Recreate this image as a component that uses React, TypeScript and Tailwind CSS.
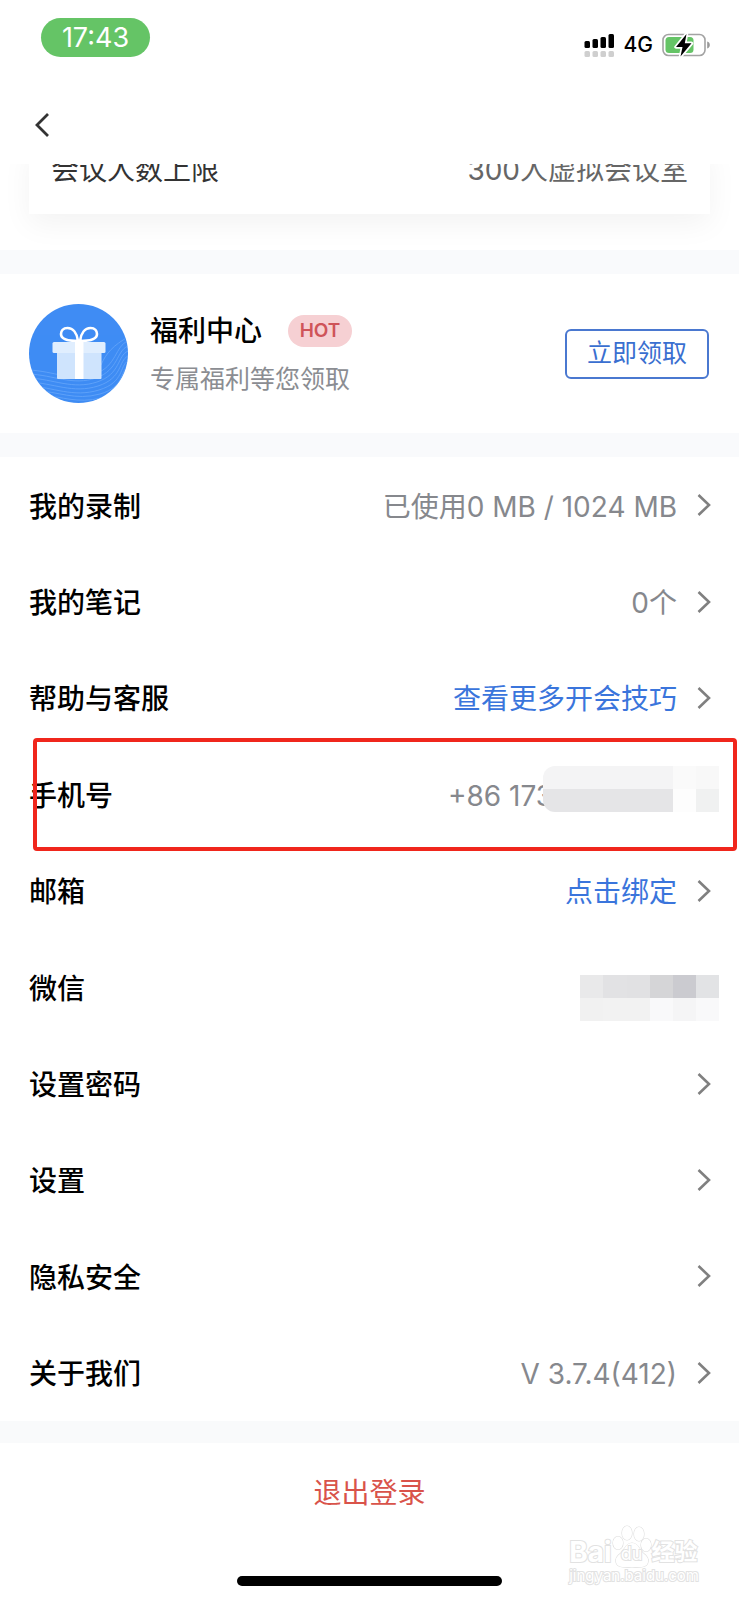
import React from "react";

type RowData = {
  label: string;
  value?: string;
  link?: boolean;
  arrow?: boolean;
  highlight?: boolean;
  mask?: "phone" | "wechat";
};

const rows: RowData[] = [
  { label: "我的录制", value: "已使用0 MB / 1024 MB", arrow: true },
  { label: "我的笔记", value: "0个", arrow: true },
  { label: "帮助与客服", value: "查看更多开会技巧", link: true, arrow: true },
  { label: "手机号", value: "+86 173", highlight: true, mask: "phone" },
  { label: "邮箱", value: "点击绑定", link: true, arrow: true },
  { label: "微信", mask: "wechat" },
  { label: "设置密码", arrow: true },
  { label: "设置", arrow: true },
  { label: "隐私安全", arrow: true },
  { label: "关于我们", value: "V 3.7.4(412)", arrow: true },
];

function StatusBar() {
  return (
    <div className="flex items-start justify-between pt-[18px] pr-[29px] pl-[41px]">
      <div className="flex h-[39px] w-[109px] items-center justify-center rounded-full bg-[#65c466] text-[27px] leading-none text-white">
        17:43
      </div>
      <div className="flex items-center gap-[9px] pt-[14px]">
        <svg width="31" height="24" viewBox="0 0 31 24" aria-hidden="true">
          <g fill="#000">
            <rect x="0.5" y="8" width="5.5" height="7" rx="1.5" />
            <rect x="8.5" y="6" width="5.5" height="9" rx="1.5" />
            <rect x="16.5" y="4" width="5.5" height="11" rx="1.5" />
            <rect x="24.5" y="1" width="5.5" height="14" rx="1.5" />
          </g>
          <g fill="#cfcfcf">
            <rect x="0.5" y="18" width="5.5" height="6" rx="1.5" />
            <rect x="8.5" y="18" width="5.5" height="6" rx="1.5" />
            <rect x="16.5" y="18" width="5.5" height="6" rx="1.5" />
            <rect x="24.5" y="18" width="5.5" height="6" rx="1.5" />
          </g>
        </svg>
        <span className="text-[21px] leading-[26px] font-medium text-black">4G</span>
        <svg width="48" height="24" viewBox="0 0 48 24" aria-hidden="true">
          <rect x="1" y="1.5" width="42" height="21" rx="5.5" fill="#fff" stroke="#a3a3a3" strokeWidth="1.6" />
          <path d="M45.2 8.5c1.800.6 2.600 1.900 2.600 3.500s-.8 2.900-2.600 3.500z" fill="#999" />
          <rect x="3.500" y="4" width="28" height="16" rx="3.500" fill="#65c466" />
          <path d="M24.500 1 14 14h6.500L18.500 23.500 29.500 10.300h-6.700z" fill="#000" stroke="#fff" strokeWidth="3.500" strokeLinejoin="round" paintOrder="stroke" />
        </svg>
      </div>
    </div>
  );
}

function GiftIcon() {
  return (
    <svg className="shrink-0" width="99" height="99" viewBox="0 0 99 99" aria-hidden="true">
      <defs>
        <clipPath id="gift-disc">
          <circle cx="49.5" cy="49.5" r="49.5" />
        </clipPath>
      </defs>
      <circle cx="49.5" cy="49.5" r="49.5" fill="#3f8cf4" />
      <g clipPath="url(#gift-disc)" fill="none" stroke="#6aa9fa" strokeWidth="0.9" opacity="0.8">
        <path d="M0 66C24 67 44 78 66 70S86 42 99 37" />
        <path d="M0 70C24 71 44 82 67 74S87 47 99 42" />
        <path d="M0 74C24 75 44 86 68 78S88 52 99 47" />
        <path d="M0 78C24 79 44 90 69 82S89 57 99 52" />
        <path d="M0 82C24 83 44 94 70 86S90 62 99 57" />
        <path d="M8 87C28 87 46 97 71 90S91 67 99 62" />
        <path d="M16 92C32 92 48 100 72 94S92 72 99 67" />
        <path d="M72 61C77 49 85 41 99 33" />
      </g>
      <g fill="none" stroke="#fff" strokeWidth="2.6">
        <path d="M49 37c-1-8-5-13-10.500-13-4.500 0-6.500 3-6.500 6 0 4.500 5 7 17 7z" />
        <path d="M51 37c1-8 5-13 10.500-13 4.500 0 6.500 3 6.500 6 0 4.500-5 7-17 7z" />
      </g>
      <rect x="28" y="45" width="44.500" height="30" rx="1" fill="#cfe4fd" />
      <rect x="23.500" y="38" width="53" height="11" rx="1.500" fill="#e0eefe" />
      <path d="M46 36h8.500v39H46z" fill="#fff" />
    </svg>
  );
}

function PhoneMask() {
  return (
    <div className="absolute top-5 right-5 grid w-[176px] grid-cols-[130px_23px_23px] grid-rows-[23px_23px]" aria-hidden="true">
      <i className="rounded-tl-xl bg-[#f4f4f5]" />
      <i className="bg-[#fafafa]" />
      <i className="bg-[#f8f8f8]" />
      <i className="rounded-bl-xl bg-[#e5e5e7]" />
      <i className="bg-[#fdfdfd]" />
      <i className="bg-[#f0f1f1]" />
    </div>
  );
}

function WechatMask() {
  return (
    <div className="absolute top-9 right-5 grid grid-cols-[23px_24px_23px_23px_23px_23px] grid-rows-[23px_23px]" aria-hidden="true">
      <i className="bg-[#e9e9ea]" />
      <i className="bg-[#e2e2e4]" />
      <i className="bg-[#e1e1e3]" />
      <i className="bg-[#d5d5d7]" />
      <i className="bg-[#cbcbd0]" />
      <i className="bg-[#e2e3e5]" />
      <i className="bg-[#f1f1f1]" />
      <i className="bg-[#f2f2f2]" />
      <i className="bg-[#f2f2f2]" />
      <i className="bg-[#f9f9fa]" />
      <i className="bg-[#f5f5f6]" />
      <i className="bg-[#f9f9fa]" />
    </div>
  );
}

function Row({ row }: { row: RowData }) {
  return (
    <li className="relative flex">
      <button type="button" className="flex flex-1 items-center pr-7 pl-[29px] text-[28px] leading-10">
        <span className="pt-[3px] font-medium text-black">{row.label}</span>
        {row.value && (
          <span
            className={
              row.link
                ? "ml-auto pt-[3px] text-[#3a75dc]"
                : row.mask
                  ? "mr-[154px] ml-auto w-[109px] pt-[3px] text-left whitespace-nowrap text-[#86888d]"
                  : "ml-auto pt-[3px] text-[#86888d]"
            }
          >
            {row.value}
          </span>
        )}
        {row.arrow && (
          <svg
            className={row.value ? "ml-5" : "ml-auto"}
            width="14"
            height="22"
            viewBox="0 0 14 22"
            fill="none"
            stroke="#808080"
            strokeWidth="2.6"
            aria-hidden="true"
          >
            <path d="M1.500 1l10.500 10L1.500 21" />
          </svg>
        )}
      </button>
      {row.mask === "phone" && <PhoneMask />}
      {row.mask === "wechat" && <WechatMask />}
      {row.highlight && (
        <div className="pointer-events-none absolute -top-2 right-[2px] -bottom-2 left-[33px] rounded-[4px] border-4 border-[#f0261c]" />
      )}
    </li>
  );
}

function Watermark() {
  return (
    <div
      className="pointer-events-none absolute right-10 bottom-4 flex flex-col text-white [paint-order:stroke_fill] [-webkit-text-stroke:2px_#e2e2e2]"
    >
      <div className="flex h-11 items-end">
        <span className="text-[28px] leading-8 font-bold">Bai</span>
        <span className="relative flex h-11 w-10 items-end justify-center">
          <svg className="absolute inset-0" width="40" height="44" viewBox="0 0 40 44" fill="#fff" stroke="#dedede" strokeWidth="1.200" aria-hidden="true">
            <ellipse cx="6" cy="19" rx="5" ry="6.500" />
            <ellipse cx="15" cy="9" rx="5" ry="7" />
            <ellipse cx="27" cy="10" rx="5" ry="7" />
            <ellipse cx="34" cy="21" rx="5" ry="6.500" />
            <path d="M20 19c-6 0-7 6-11 10-4 3-6 6-5 9 1 6 8 5 16 5s15 1 16-5c1-3-1-6-5-9-4-4-5-10-11-10z" />
          </svg>
          <span className="relative text-lg leading-7">du</span>
        </span>
        <span className="text-[23px] leading-8 font-bold">经验</span>
      </div>
      <span className="text-[15px] leading-4">jingyan.baidu.com</span>
    </div>
  );
}

export default function App() {
  return (
    <main className="relative flex min-h-screen flex-col overflow-hidden bg-white font-['Inter','Noto_Sans_CJK_SC',sans-serif]">
      <header className="h-[164px]">
        <StatusBar />
        <button type="button" aria-label="返回" className="mt-[54px] ml-[34px] flex h-[26px] w-5 items-center">
          <svg width="16" height="26" viewBox="0 0 16 26" fill="none" stroke="#333" strokeWidth="2.8" aria-hidden="true">
            <path d="M14 2L3 13l11 11" />
          </svg>
        </button>
      </header>

      <section className="h-[86px] overflow-hidden">
        <div className="mx-[29px] -mt-5 flex justify-between bg-white px-[22px] pt-[6px] pb-6 text-[28px] leading-10 shadow-[0_10px_30px_rgba(0,0,0,0.05)]">
          <span className="text-[#333]">会议人数上限</span>
          <span className="text-[#666]">300人虚拟会议室</span>
        </div>
      </section>

      <section className="flex items-center border-y-[24px] border-[#f9fafc] py-[30px] pr-[30px] pl-[29px]">
        <GiftIcon />
        <div className="ml-[22px] flex flex-1 flex-col gap-2 pt-[2px]">
          <div className="flex items-center gap-[26px]">
            <h2 className="text-[28px] leading-10 font-medium text-black">福利中心</h2>
            <span className="flex h-8 w-16 items-center justify-center rounded-full bg-[#f6d0d3] text-[19px] leading-none font-semibold text-[#cf5459]">
              HOT
            </span>
          </div>
          <p className="text-[25px] leading-10 text-[#8b8d92]">专属福利等您领取</p>
        </div>
        <button type="button" className="h-[50px] rounded-md border-2 border-[#4a78d0] px-5 text-[25px] leading-none text-[#3a6fd0]">
          立即领取
        </button>
      </section>

      <ul className="grid flex-1 auto-rows-fr">
        {rows.map((row) => (
          <Row key={row.label} row={row} />
        ))}
      </ul>

      <footer className="flex flex-col items-center border-t-[22px] border-[#f9fafb] pt-[30px] pb-[14px]">
        <button type="button" className="text-[28px] leading-10 text-[#d9534a]">
          退出登录
        </button>
        <div className="mt-[63px] h-[10px] w-[265px] rounded-full bg-black" />
      </footer>
      <Watermark />
    </main>
  );
}
